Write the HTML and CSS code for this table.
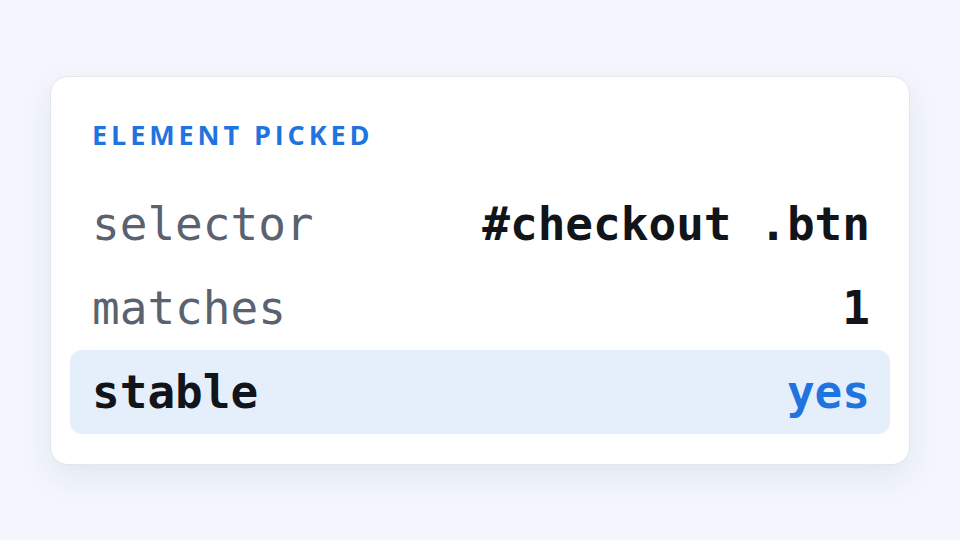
FILE: index.html
```html
<!DOCTYPE html>
<html>
<head>
<meta charset="utf-8">
<link rel="stylesheet" href="styles.css">
</head>
<body>
<div class="card">
  <div class="title">ELEMENT PICKED</div>
  <div class="row">
    <span class="key">selector</span>
    <span class="val">#checkout .btn</span>
  </div>
  <div class="row">
    <span class="key">matches</span>
    <span class="val">1</span>
  </div>
  <div class="row active">
    <span class="key">stable</span>
    <span class="val">yes</span>
  </div>
</div>
</body>
</html>
```
FILE: styles.css
```css
html, body {
  margin: 0;
  padding: 0;
}
body {
  width: 960px;
  height: 540px;
  background: #f3f6fc;
  overflow: hidden;
}
.card {
  box-sizing: border-box;
  margin: 76px 0 0 50px;
  width: 860px;
  height: 389px;
  background: #ffffff;
  border: 1px solid #e3e6eb;
  border-radius: 18px;
  box-shadow: 0 12px 32px rgba(30, 50, 90, 0.08);
  padding: 32px 19px 29px;
}
.title {
  font-family: "Open Sans", "Noto Sans", sans-serif;
  font-weight: 700;
  font-size: 27px;
  letter-spacing: 3.9px;
  color: #1f74e0;
  padding: 0 22px;
  height: 52px;
  line-height: 52px;
  margin-bottom: 21px;
}
.row {
  display: flex;
  justify-content: space-between;
  align-items: center;
  height: 84px;
  padding: 0 22px;
  border-radius: 12px;
  font-family: "DejaVu Sans Mono", monospace;
  font-size: 46px;
}
.key {
  color: #5a6270;
}
.val {
  color: #111418;
  font-weight: 700;
  margin-right: -2px;
}
.active {
  background: #e5effc;
}
.active .key {
  color: #111418;
  font-weight: 700;
}
.active .val {
  color: #1f74e0;
}
```
